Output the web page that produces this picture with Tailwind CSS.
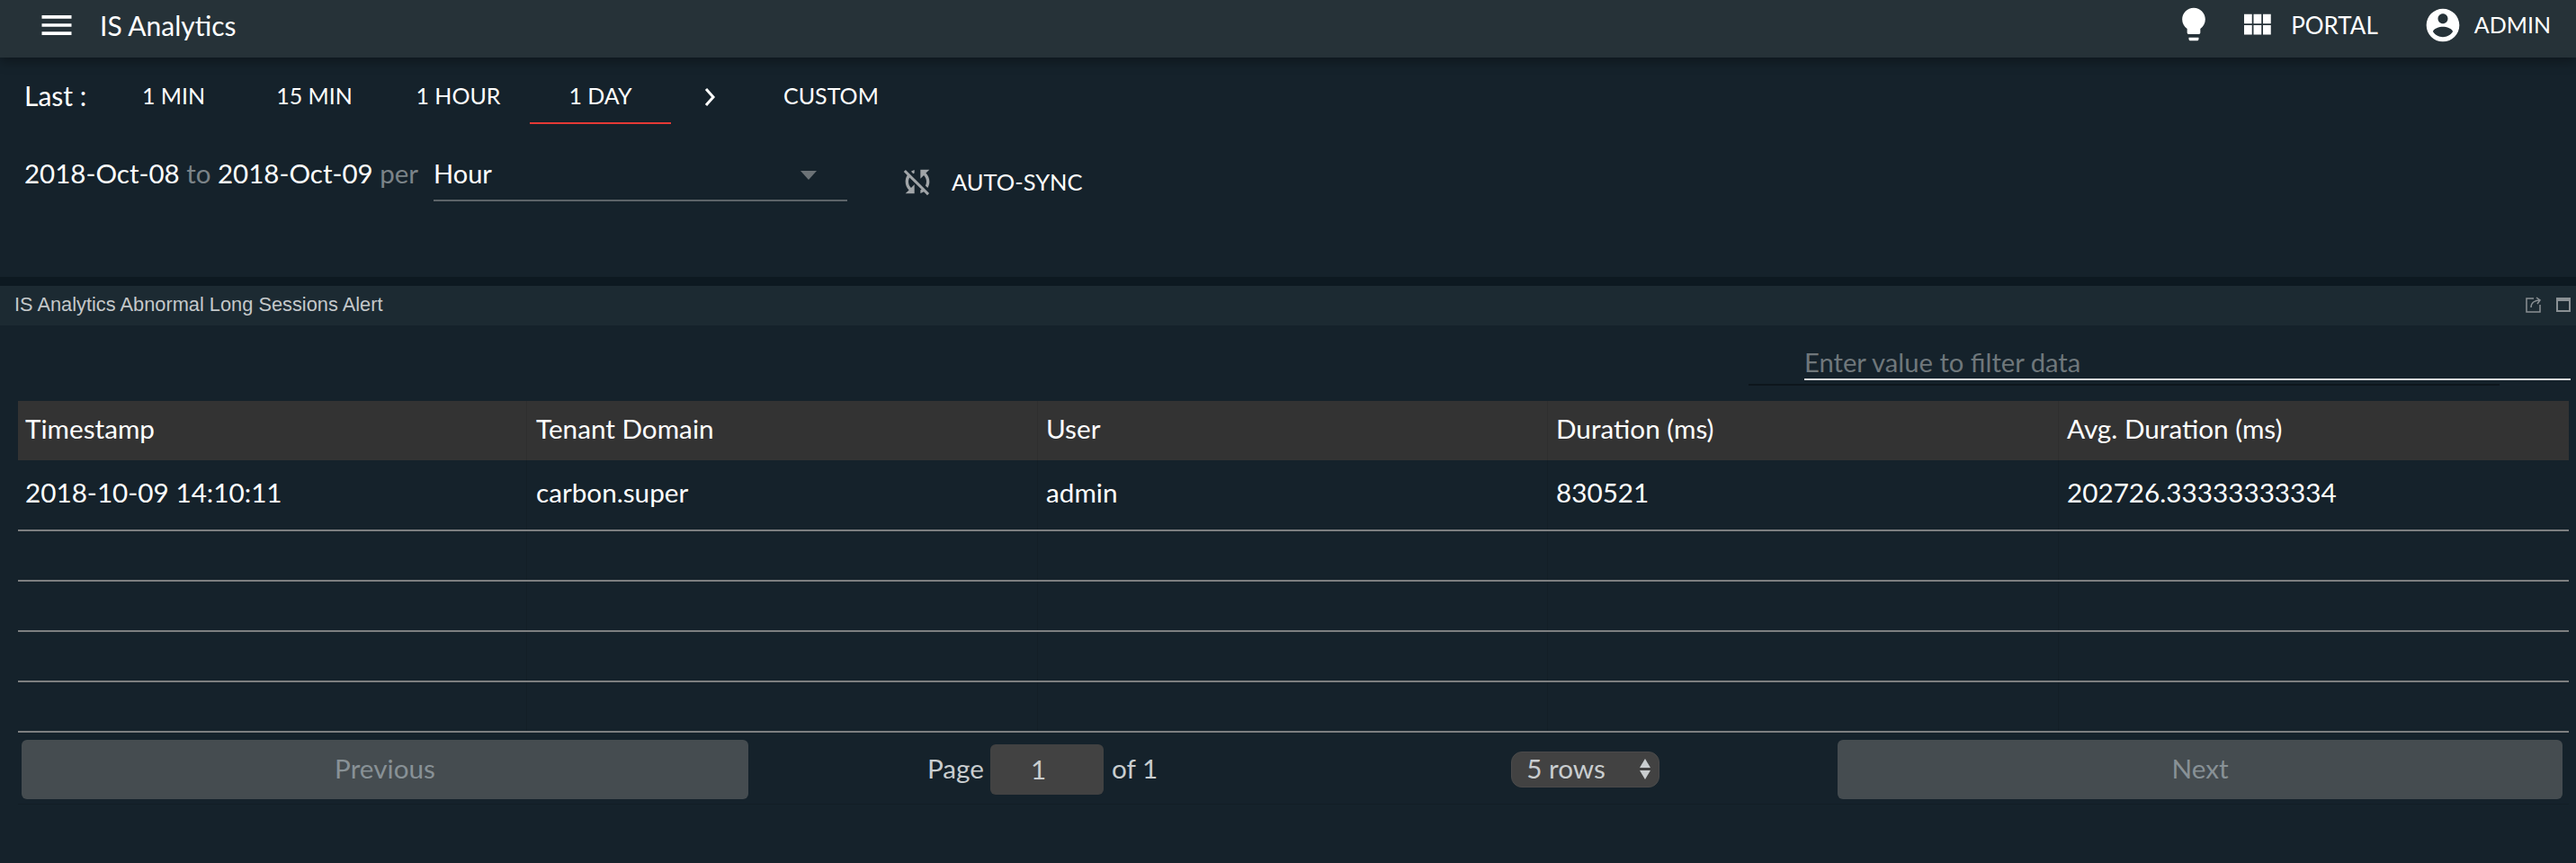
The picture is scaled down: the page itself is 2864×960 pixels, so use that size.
<!DOCTYPE html>
<html lang="en">
<head>
    <meta charset="UTF-8">
    <title>IS Analytics</title>
    <script src="https://cdn.jsdelivr.net/npm/@tailwindcss/browser@4"></script>
</head>
<body class="bg-[#15222b] font-['Lato',sans-serif] text-white w-[2864px] h-[960px] overflow-hidden">
    <!-- top bar -->
    <header class="h-16 pb-2 bg-[#263238] flex items-center justify-between shadow-[0_4px_12px_rgba(0,0,0,0.35)] relative">
        <div class="flex items-center pl-[41px]">
            <svg class="w-11 h-11" viewBox="0 0 24 24" fill="#fff"><path d="M3 18h18v-2H3v2zm0-5h18v-2H3v2zm0-7v2h18V6H3z"/></svg>
            <span class="ml-[26px] text-[30px]">IS Analytics</span>
        </div>
        <div class="flex items-center pr-[28px] text-[26px]">
            <svg class="w-11 h-11 -mt-0.5" viewBox="0 0 24 24" fill="#fff"><path d="M9 21c0 .55.45 1 1 1h4c.55 0 1-.45 1-1v-1H9v1zm3-19C8.14 2 5 5.14 5 9c0 2.38 1.19 4.47 3 5.74V17c0 .55.45 1 1 1h6c.55 0 1-.45 1-1v-2.26c1.81-1.27 3-3.36 3-5.74 0-3.86-3.14-7-7-7z"/></svg>
            <svg class="w-[42px] h-[42px] ml-[27px]" viewBox="0 0 24 24" fill="#fff"><path d="M4 11h5V5H4v6zm0 7h5v-6H4v6zm6 0h5v-6h-5v6zm6 0h5v-6h-5v6zm-6-7h5V5h-5v6zm6-6v6h5V5h-5z"/></svg>
            <span class="ml-[17px]">PORTAL</span>
            <svg class="w-11 h-11 ml-[50px]" viewBox="0 0 24 24" fill="#fff"><path d="M12 2C6.48 2 2 6.48 2 12s4.48 10 10 10 10-4.48 10-10S17.52 2 12 2zm0 3c1.66 0 3 1.34 3 3s-1.34 3-3 3-3-1.34-3-3 1.34-3 3-3zm0 14.2c-2.5 0-4.71-1.28-6-3.22.03-1.99 4-3.08 6-3.08 1.99 0 5.97 1.09 6 3.08-1.29 1.94-3.5 3.22-6 3.22z"/></svg>
            <span class="ml-[13px] text-[25px]">ADMIN</span>
        </div>
    </header>

    <!-- date range controls -->
    <section class="h-[244px] pl-[27px] pt-[14px]">
        <div class="flex items-center h-[60px] text-[25px]">
            <span class="w-[96px] text-[30px] pb-[3px]">Last :</span>
            <div class="w-[146px] text-center pr-[6px] pb-[2px]">1 MIN</div>
            <div class="w-[161px] text-center pb-[2px]">15 MIN</div>
            <div class="w-[159px] text-center pb-[2px]">1 HOUR</div>
            <div class="w-[157px] text-center h-[60px] leading-[56px] border-b-2 border-[#e53935]">1 DAY</div>
            <svg class="w-8 h-10 ml-[28px]" viewBox="0 0 32 40" fill="none" stroke="#fff" stroke-width="3"><path d="M11 11l8 9-8 9"/></svg>
            <div class="ml-[65px] pb-[2px]">CUSTOM</div>
        </div>
        <div class="flex items-start mt-[35px]">
            <div class="text-[29.5px] leading-[40px] w-[455px] whitespace-nowrap">2018-Oct-08 <span class="text-[#7b8388]">to</span> 2018-Oct-09 <span class="text-[#7b8388]">per</span></div>
            <div class="w-[460px] h-[51px] border-b-2 border-[#5c6368] flex justify-between pr-[34px] text-[29px] leading-[40px]">
                <span>Hour</span>
                <span class="mt-[17px] w-0 h-0 border-x-[9px] border-x-transparent border-t-[10px] border-t-[#6c7377]"></span>
            </div>
            <div class="flex items-center ml-[58px] mt-[5px] h-[48px] text-[25.5px]">
                <svg class="w-10 h-10" viewBox="0 0 24 24" fill="#a1a5a8"><path d="M10 6.35V4.26c-.8.21-1.55.54-2.23.96l1.46 1.46c.25-.12.5-.24.77-.33zm-7.14-.94l2.36 2.36C4.45 8.99 4 10.44 4 12c0 2.21.91 4.2 2.36 5.64L4 20h6v-6l-2.24 2.24C6.68 15.15 6 13.66 6 12c0-1 .25-1.94.68-2.77l8.08 8.08c-.25.13-.5.25-.77.34v2.09c.8-.21 1.55-.54 2.23-.96l2.36 2.36 1.27-1.27L4.14 4.14 2.86 5.41zM20 4h-6v6l2.24-2.24C17.32 8.85 18 10.34 18 12c0 1-.25 1.94-.68 2.77l1.46 1.46C19.55 15.01 20 13.56 20 12c0-2.21-.91-4.2-2.36-5.64L20 4z"/></svg>
                <span class="ml-[18px]">AUTO-SYNC</span>
            </div>
        </div>
    </section>

    <!-- widget -->
    <div class="h-[10px] bg-[#0d1921]"></div>
    <div class="h-11 pb-[2px] bg-[#1c2a32] flex items-center justify-between pl-[16px] pr-[6px] font-['Liberation_Sans',sans-serif] text-[21.8px] text-[#c4c8ca]">
        <span>IS Analytics Abnormal Long Sessions Alert</span>
        <div class="flex items-center gap-[16px]">
            <svg class="w-[18px] h-[18px]" viewBox="0 0 18 18" fill="none" stroke="#8a9094" stroke-width="1.5"><path d="M9 2H1v15h15V9"/><path d="M6 12c0-5 4-8 10-8M12 1l4 3-3 4"/></svg>
            <div class="w-4 h-4 border-2 border-t-4 border-[#8a9094]"></div>
        </div>
    </div>

    <div class="flex justify-end pr-[6px] pt-[22px]">
        <div class="w-[852px] h-[39px] border-b-2 border-[#d5d7d8] text-[29.2px] leading-[38px] text-[#6f777b]">Enter value to filter data</div>
    </div>
    <div class="ml-[1944px] w-[835px] h-0.5 mt-[4px] bg-[#0d161c]"></div>

    <!-- table -->
    <div class="ml-5 w-[2836px] mt-[17px] text-[29.7px]">
        <div class="grid grid-cols-[566px_568px_567px_568px_567px] divide-x divide-[#2f2f2f] h-[66px] bg-[#333333] leading-[62px]">
            <div class="pl-2">Timestamp</div>
            <div class="pl-[10px]">Tenant Domain</div>
            <div class="pl-[9px]">User</div>
            <div class="pl-[9px]">Duration (ms)</div>
            <div class="pl-[9px]">Avg. Duration (ms)</div>
        </div>
        <div class="grid grid-cols-[566px_568px_567px_568px_567px] divide-x divide-[#131f27] h-[79px] leading-[72px] border-b-2 border-[#7d7f80]">
            <div class="pl-2">2018-10-09 14:10:11</div>
            <div class="pl-[10px]">carbon.super</div>
            <div class="pl-[9px]">admin</div>
            <div class="pl-[9px]">830521</div>
            <div class="pl-[9px]">202726.33333333334</div>
        </div>
        <div class="grid grid-cols-[566px_568px_567px_568px_567px] divide-x divide-[#131f27] h-14 border-b-2 border-[#7d7f80]"><div></div><div></div><div></div><div></div><div></div></div>
        <div class="grid grid-cols-[566px_568px_567px_568px_567px] divide-x divide-[#131f27] h-14 border-b-2 border-[#7d7f80]"><div></div><div></div><div></div><div></div><div></div></div>
        <div class="grid grid-cols-[566px_568px_567px_568px_567px] divide-x divide-[#131f27] h-14 border-b-2 border-[#7d7f80]"><div></div><div></div><div></div><div></div><div></div></div>
        <div class="grid grid-cols-[566px_568px_567px_568px_567px] divide-x divide-[#131f27] h-14 border-b-2 border-[#7d7f80]"><div></div><div></div><div></div><div></div><div></div></div>

        <!-- pagination -->
        <div class="flex items-center h-[80px] pt-0.5 pl-1 pr-[7px] border-b border-[#121d25] text-[#c9cdcf]">
            <div class="w-[808px] h-[66px] rounded-md bg-[#454c50] text-[#889196] flex items-center justify-center">Previous</div>
            <div class="ml-[199px] flex items-center">
                <span>Page</span>
                <div class="ml-[7px] w-[126px] h-14 rounded-md bg-[#424242] pl-[45px] leading-[56px]">1</div>
                <span class="ml-[9px]">of 1</span>
            </div>
            <div class="ml-[393px] w-[165px] h-10 rounded-xl bg-[#424242] border border-[#4a4a4a] pl-4 flex items-center justify-between pr-[9px]">
                <span>5 rows</span>
                <div class="flex flex-col gap-[3px]">
                    <span class="w-0 h-0 border-x-[6px] border-x-transparent border-b-[10px] border-b-[#c9cdcf]"></span>
                    <span class="w-0 h-0 border-x-[6px] border-x-transparent border-t-[10px] border-t-[#c9cdcf]"></span>
                </div>
            </div>
            <div class="ml-auto w-[806px] h-[66px] rounded-md bg-[#454c50] text-[#889196] flex items-center justify-center">Next</div>
        </div>
    </div>
</body>
</html>
